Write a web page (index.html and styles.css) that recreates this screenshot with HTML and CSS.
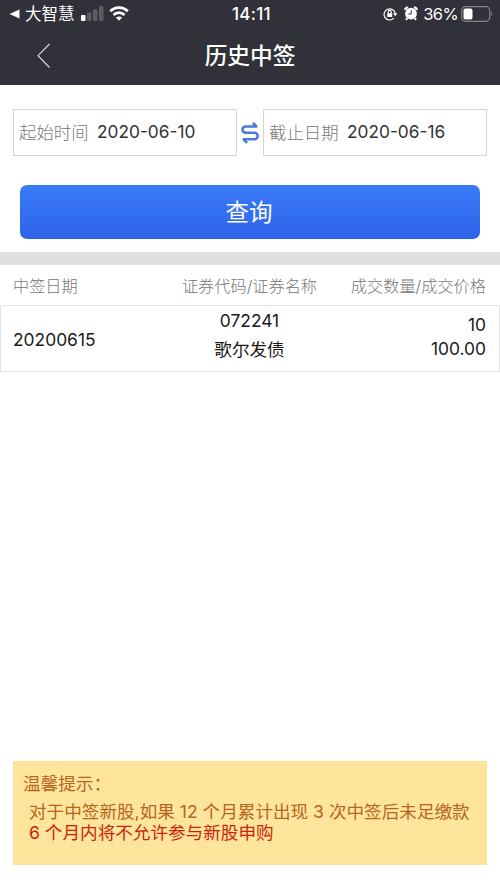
FILE: index.html
```html
<!DOCTYPE html>
<html lang="zh-CN">
<head>
    <meta charset="UTF-8">
    <meta name="viewport" content="width=device-width, initial-scale=1.0">
    <title>历史中签</title>
    <link rel="stylesheet" href="styles.css">
</head>
<body>
    <header>
        <div class="status-bar">
            <div class="status-left">
                <svg width="11" height="10" viewBox="0 0 11 10"><path d="M0.5 5L10.5 0.500V9.500Z" fill="#fff"/></svg>
                <span class="app-name">大智慧</span>
                <svg class="signal" width="23" height="15" viewBox="0 0 23 15">
                    <rect x="0" y="9" width="4.500" height="6" rx="1" fill="#fff"/>
                    <rect x="6" y="6.500" width="4.500" height="8.500" rx="1" fill="#5c5d63"/>
                    <rect x="12" y="3.500" width="4.500" height="11.500" rx="1" fill="#5c5d63"/>
                    <rect x="18" y="0" width="4.500" height="15" rx="1" fill="#5c5d63"/>
                </svg>
                <svg width="20" height="15" viewBox="0 0 20 15" fill="none" stroke="#fff" stroke-width="2.700">
                    <path d="M1.200 5.300C6.200 0.300 13.800 0.300 18.800 5.300"/>
                    <path d="M4.500 9C7.700 5.900 12.300 5.900 15.500 9"/>
                    <path d="M10 14.800L6.900 11.600C8.700 10 11.300 10 13.100 11.600Z" fill="#fff" stroke="none"/>
                </svg>
            </div>
            <span class="clock">14:11</span>
            <div class="status-right">
                <svg width="15" height="14" viewBox="0 0 15 14" fill="none" stroke="#fff" stroke-width="1.200">
                    <path d="M10.800 11.200A5.600 5.600 0 1 1 12.200 6.500"/>
                    <path d="M9.900 6.300H14.500L12.200 9.200Z" fill="#fff" stroke="none"/>
                    <rect x="4.200" y="6.200" width="5" height="3.800" fill="#fff" stroke="none"/>
                    <path d="M5.200 6.300V4.900A1.500 1.500 0 0 1 8.200 4.900V6.300"/>
                </svg>
                <svg class="alarm" width="14" height="15" viewBox="0 0 14 15">
                    <circle cx="7" cy="7.700" r="5.900" fill="#fff"/>
                    <path d="M1.500 4A1.800 1.800 0 0 1 4 1.800M10 1.800A1.800 1.800 0 0 1 12.500 4M3.200 12.200L2 13.700M10.800 12.200L12 13.700" fill="none" stroke="#fff" stroke-width="2.200"/>
                    <path d="M7.200 4.300V8H4.300" fill="none" stroke="#303139" stroke-width="1"/>
                </svg>
                <span class="percent">36%</span>
                <svg width="33" height="16" viewBox="0 0 33 16">
                    <rect x="0.700" y="0.700" width="28" height="14.600" rx="4" fill="none" stroke="#85868b" stroke-width="1.200"/>
                    <rect x="2.500" y="2.500" width="9" height="11" rx="2" fill="#fff"/>
                    <path d="M30.300 5.500Q32.700 8 30.300 10.500Z" fill="#85868b"/>
                </svg>
            </div>
        </div>
        <div class="nav-bar">
            <svg class="back" width="14" height="26" viewBox="0 0 14 26"><path d="M12.500 1L1 12.700L12.500 24.500" fill="none" stroke="#d5d6da" stroke-width="1.200"/></svg>
            <h1>历史中签</h1>
        </div>
    </header>

    <div class="search-form">
        <div class="date-row">
            <div class="date-box"><label>起始时间</label><span>2020-06-10</span></div>
            <svg width="18" height="22" viewBox="0 0 18 22" fill="none" stroke="#4979dc" stroke-width="2.600" stroke-linejoin="round">
                <path d="M12 0.900L15.300 4.500H4.600A3.100 3.100 0 0 0 4.600 10.700H13.400A3.300 3.300 0 0 1 13.400 17.300H2.700L6 21"/>
            </svg>
            <div class="date-box"><label>截止日期</label><span>2020-06-16</span></div>
        </div>
        <button class="query-btn">查询</button>
    </div>

    <div class="divider"></div>

    <div class="row table-head">
        <div>中签日期</div>
        <div class="center">证券代码/证券名称</div>
        <div class="right">成交数量/成交价格</div>
    </div>
    <div class="row table-row">
        <div>20200615</div>
        <div class="center stock"><p>072241</p><p class="stock-name">歌尔发债</p></div>
        <div class="right amount"><p>10</p><p>100.00</p></div>
    </div>

    <div class="tips">
        <p class="tips-title">温馨提示：</p>
        <p class="tips-text">对于中签新股,如果 12 个月累计出现 3 次中签后未足缴款</p>
        <p class="tips-text warn">6 个月内将不允许参与新股申购</p>
    </div>
</body>
</html>
```
FILE: styles.css
```css
* {
    box-sizing: border-box;
}
body {
    margin: 0;
    height: 889px;
    display: flex;
    flex-direction: column;
    background-color: #fff;
    font-family: Inter, "Noto Sans CJK SC", sans-serif;
    color: #1a1a1a;
}
p, h1 {
    margin: 0;
}
svg {
    display: block;
    flex-shrink: 0;
}
header {
    height: 85px;
    background-color: #303139;
    color: #fff;
}
.status-bar {
    height: 27px;
    padding: 0 6px 0 9px;
    display: grid;
    grid-template-columns: 1fr auto 1fr;
    align-items: center;
}
.status-left, .status-right {
    display: flex;
    align-items: center;
}
.status-right {
    justify-content: flex-end;
}
.app-name {
    margin: 0 6px 0 5px;
    font-size: 16.5px;
    line-height: 26px;
}
.signal {
    margin-right: 5px;
}
.clock {
    font-size: 17px;
    font-weight: 500;
    letter-spacing: 0.3px;
}
.alarm {
    margin: 0 5px 0 6px;
}
.percent {
    margin-right: 3px;
    font-size: 16.5px;
    letter-spacing: -0.6px;
}
.nav-bar {
    height: 58px;
    position: relative;
    display: flex;
    justify-content: center;
}
.back {
    position: absolute;
    left: 37px;
    top: 16px;
}
h1 {
    font-size: 22.7px;
    font-weight: 500;
    line-height: 58px;
}
.search-form {
    height: 167px;
    padding: 24px 13px 0;
}
.date-row {
    display: flex;
    align-items: center;
    justify-content: space-between;
}
.date-box {
    width: 224px;
    height: 47px;
    padding: 0 0 2px 5px;
    display: flex;
    align-items: center;
    border: 1px solid #d5d5d5;
    font-size: 17.3px;
    color: #333;
}
.date-box label {
    width: 78px;
    font-size: 17.4px;
    font-weight: 300;
    color: #777;
}
.query-btn {
    display: block;
    width: 460px;
    height: 54px;
    margin: 29px auto 0;
    padding: 0 2px 2px 0;
    border: none;
    border-radius: 7px;
    background: linear-gradient(#397bf8, #2f63eb);
    color: #fff;
    font-family: inherit;
    font-size: 23.5px;
}
.divider {
    height: 13px;
    background-color: #dfdfdf;
}
.row {
    display: grid;
    grid-template-columns: 1fr 1fr 1fr;
    align-items: center;
    padding: 0 13px;
}
.center {
    text-align: center;
}
.right {
    text-align: right;
}
.table-head {
    height: 40px;
    padding: 0 14px 0 13px;
    font-size: 16.2px;
    font-weight: 300;
    color: #777;
    white-space: nowrap;
}
.table-row {
    height: 67px;
    border: 1px solid #e3e3e3;
    padding: 0 13px 0 12px;
    font-size: 17.4px;
}
.stock {
    line-height: 29px;
    padding-bottom: 8px;
}
.stock-name {
    font-size: 17.6px;
}
.amount {
    line-height: 24px;
    padding-bottom: 4px;
}
.tips {
    height: 104px;
    margin: auto 13px 24px;
    padding: 12px 10px 0;
    background-color: #ffe59c;
    color: #b5651d;
    font-size: 17.6px;
    line-height: 21px;
}
.tips-title {
    margin-bottom: 7px;
}
.tips-text {
    padding-left: 6px;
    white-space: nowrap;
}
.warn {
    color: #cc1f0c;
}
```
